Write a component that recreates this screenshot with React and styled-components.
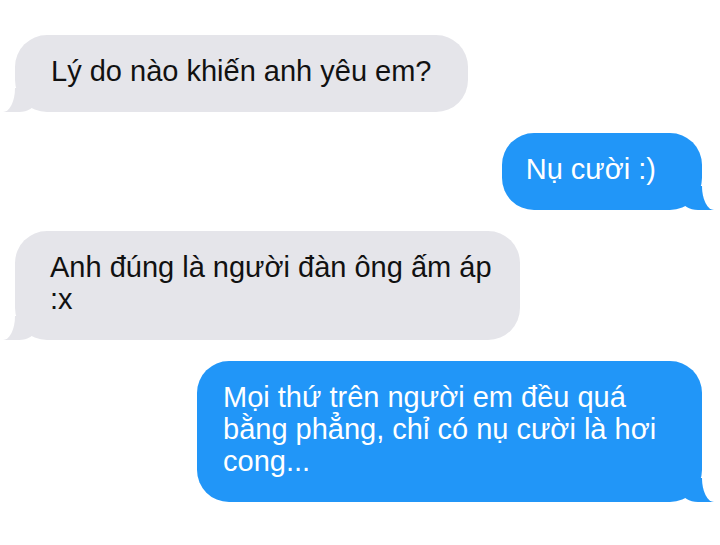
import React from "react";
import styled, { createGlobalStyle } from "styled-components";

const GRAY = "#e5e5ea";
const BLUE = "#2196f8";
const PAGE = "#ffffff";

const GlobalStyle = createGlobalStyle`
  html, body {
    margin: 0;
    padding: 0;
    background: ${PAGE};
  }
  body {
    font-family: "Liberation Sans", Arial, Helvetica, sans-serif;
    -webkit-font-smoothing: antialiased;
  }
`;

const messages = [
  { me: false, text: "Lý do nào khiến anh yêu em?", left: 36, right: 36 },
  { me: true, text: "Nụ cười :)", left: 24, right: 46 },
  { me: false, text: "Anh đúng là người đàn ông ấm áp :x", left: 35, right: 24 },
  {
    me: true,
    text: "Mọi thứ trên người em đều quá bằng phẳng, chỉ có nụ cười là hơi cong...",
    left: 26,
    right: 33,
  },
];

const App = () => {
  return (
    <>
      <GlobalStyle />
      <Thread>
        {messages.map((m, i) => (
          <Bubble key={i} $me={m.me} $left={m.left} $right={m.right}>
            {m.text}
          </Bubble>
        ))}
      </Thread>
    </>
  );
};

// CONTAINER
const Thread = styled.div`
  width: 720px;
  min-height: 545px;
  box-sizing: border-box;
  padding: 35px 18px 0 15px;
  display: flex;
  flex-direction: column;
  gap: 21px;
  background: ${PAGE};
  overflow: hidden;
`;

// BUBBLE + TAIL
const Bubble = styled.div`
  position: relative;
  box-sizing: border-box;
  max-width: 505px;
  align-self: ${(p) => (p.$me ? "flex-end" : "flex-start")};
  padding: 20px ${(p) => p.$right}px 25px ${(p) => p.$left}px;
  border-radius: 32px;
  background: ${(p) => (p.$me ? BLUE : GRAY)};
  color: ${(p) => (p.$me ? "#ffffff" : "#111111")};
  font-size: 29px;
  line-height: 32px;

  &::before,
  &::after {
    content: "";
    position: absolute;
    bottom: 0;
    height: 24px;
  }

  &::before {
    width: 32px;
    background: ${(p) => (p.$me ? BLUE : GRAY)};
    ${(p) =>
      p.$me
        ? `right: -12px; border-bottom-left-radius: 16px 10px;`
        : `left: -12px; border-bottom-right-radius: 16px 10px;`}
  }

  &::after {
    width: 32px;
    background: ${PAGE};
    ${(p) =>
      p.$me
        ? `right: -32px; border-bottom-left-radius: 12px 24px;`
        : `left: -32px; border-bottom-right-radius: 12px 24px;`}
  }
`;

export default App;
